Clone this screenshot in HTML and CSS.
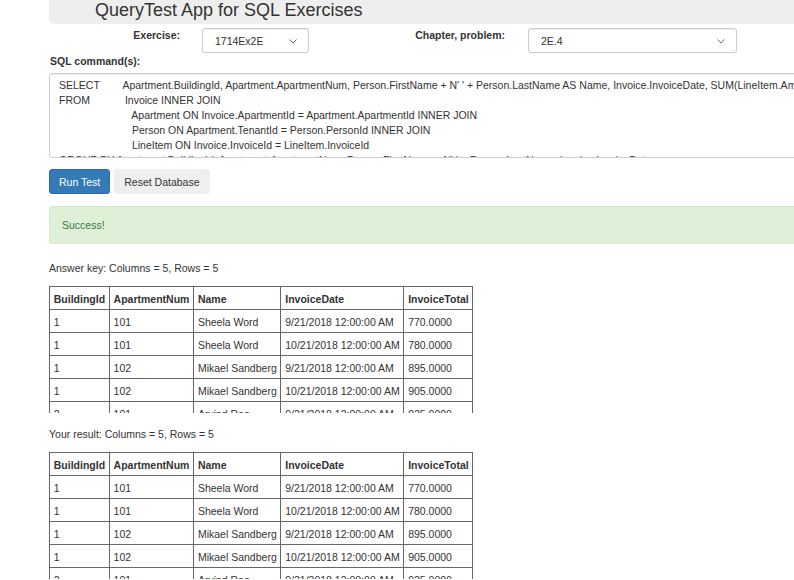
FILE: index.html
```html
<!DOCTYPE html>
<html>
<head>
<meta charset="utf-8">
<title>QueryTest App for SQL Exercises</title>
<link rel="stylesheet" href="styles.css">
</head>
<body>
<div class="page">
  <div class="header">QueryTest App for SQL Exercises</div>

  <div class="form-row">
    <label class="ctl-label ctl-label-ex">Exercise:</label>
    <div class="select select-ex"><span>1714Ex2E</span><svg class="chev" width="8" height="5" viewBox="0 0 8 5"><polyline points="0.5,0.5 4,4 7.5,0.5" fill="none" stroke="#666" stroke-width="1"/></svg></div>
    <label class="ctl-label ctl-label-ch">Chapter, problem:</label>
    <div class="select select-ch"><span>2E.4</span><svg class="chev" width="8" height="5" viewBox="0 0 8 5"><polyline points="0.5,0.5 4,4 7.5,0.5" fill="none" stroke="#666" stroke-width="1"/></svg></div>
  </div>

  <div class="sql-label">SQL command(s):</div>
  <div class="sql-box">SELECT        Apartment.BuildingId, Apartment.ApartmentNum, Person.FirstName + N' ' + Person.LastName AS Name, Invoice.InvoiceDate, SUM(LineItem.Amount) AS InvoiceTotal
FROM            Invoice INNER JOIN
                         Apartment ON Invoice.ApartmentId = Apartment.ApartmentId INNER JOIN
                         Person ON Apartment.TenantId = Person.PersonId INNER JOIN
                         LineItem ON Invoice.InvoiceId = LineItem.InvoiceId
GROUP BY Apartment.BuildingId, Apartment.ApartmentNum, Person.FirstName + N' ' + Person.LastName, Invoice.InvoiceDate</div>

  <div class="btn-row">
    <button class="btn btn-primary">Run Test</button>
    <button class="btn btn-default">Reset Database</button>
  </div>

  <div class="alert">Success!</div>

  <div class="result-label first">Answer key: Columns = 5, Rows = 5</div>
  <div class="table-wrap">
    <table class="grid">
      <tr><th>BuildingId</th><th>ApartmentNum</th><th>Name</th><th>InvoiceDate</th><th>InvoiceTotal</th></tr>
      <tr><td>1</td><td>101</td><td>Sheela Word</td><td>9/21/2018 12:00:00 AM</td><td>770.0000</td></tr>
      <tr><td>1</td><td>101</td><td>Sheela Word</td><td>10/21/2018 12:00:00 AM</td><td>780.0000</td></tr>
      <tr><td>1</td><td>102</td><td>Mikael Sandberg</td><td>9/21/2018 12:00:00 AM</td><td>895.0000</td></tr>
      <tr><td>1</td><td>102</td><td>Mikael Sandberg</td><td>10/21/2018 12:00:00 AM</td><td>905.0000</td></tr>
      <tr><td>2</td><td>101</td><td>Arvind Rao</td><td>9/21/2018 12:00:00 AM</td><td>925.0000</td></tr>
    </table>
  </div>

  <div class="result-label second">Your result: Columns = 5, Rows = 5</div>
  <div class="table-wrap">
    <table class="grid">
      <tr><th>BuildingId</th><th>ApartmentNum</th><th>Name</th><th>InvoiceDate</th><th>InvoiceTotal</th></tr>
      <tr><td>1</td><td>101</td><td>Sheela Word</td><td>9/21/2018 12:00:00 AM</td><td>770.0000</td></tr>
      <tr><td>1</td><td>101</td><td>Sheela Word</td><td>10/21/2018 12:00:00 AM</td><td>780.0000</td></tr>
      <tr><td>1</td><td>102</td><td>Mikael Sandberg</td><td>9/21/2018 12:00:00 AM</td><td>895.0000</td></tr>
      <tr><td>1</td><td>102</td><td>Mikael Sandberg</td><td>10/21/2018 12:00:00 AM</td><td>905.0000</td></tr>
      <tr><td>2</td><td>101</td><td>Arvind Rao</td><td>9/21/2018 12:00:00 AM</td><td>925.0000</td></tr>
    </table>
  </div>
</div>
</body>
</html>
```

FILE: styles.css
```css
html, body {
  margin: 0;
  padding: 0;
  overflow: hidden;
  background: #fff;
}

body {
  font-family: "Liberation Sans", Arial, sans-serif;
  font-size: 10.5px;
  line-height: 15px;
  color: #333;
}

.page {
  width: 1200px;
  padding-left: 49px;
}

.header {
  height: 24px;
  box-sizing: border-box;
  background: #eee;
  border-radius: 0 0 6px 6px;
  padding-left: 46px;
  font-size: 18px;
  line-height: 20px;
  color: #333;
}

.form-row {
  display: flex;
  align-items: flex-start;
  margin-top: 4px;
  height: 25px;
}

.ctl-label {
  font-weight: bold;
  text-align: right;
  line-height: 15px;
}

.ctl-label-ex {
  width: 131px;
  margin-right: 22px;
}

.ctl-label-ch {
  width: 196px;
  margin-right: 23px;
}

.select {
  box-sizing: border-box;
  height: 25px;
  display: flex;
  align-items: center;
  justify-content: space-between;
  border: 1px solid #ccc;
  border-radius: 3px;
  background: #fff;
  padding: 0 11px 0 12px;
  box-shadow: inset 0 1px 1px rgba(0, 0, 0, 0.075);
  color: #333;
}

.select span {
  padding-top: 1px;
}

.select-ex {
  width: 107px;
}

.select-ch {
  width: 209px;
}

.chev {
  display: block;
  margin-top: 1px;
}

.sql-label {
  font-weight: bold;
  margin-top: 1px;
  padding-left: 1px;
}

.sql-box {
  box-sizing: border-box;
  margin-top: 4px;
  height: 85px;
  border: 1px solid #ccc;
  border-radius: 3px;
  padding: 3.5px 9px 0 9px;
  white-space: pre;
  overflow: hidden;
  color: #333;
  box-shadow: inset 0 1px 1px rgba(0, 0, 0, 0.075);
}

.btn-row {
  display: flex;
  gap: 4px;
  margin-top: 11px;
}

.btn {
  font-family: "Liberation Sans", Arial, sans-serif;
  font-size: 10.5px;
  line-height: 15px;
  height: 25px;
  box-sizing: border-box;
  padding: 4.5px 9px 3.5px 9px;
  border-radius: 3px;
  border: 1px solid transparent;
  margin: 0;
}

.btn-primary {
  background: #337ab7;
  border-color: #2e6da4;
  color: #fff;
}

.btn-default {
  background: #efefef;
  border-color: #efefef;
  color: #333;
}

.alert {
  margin-top: 12px;
  box-sizing: border-box;
  height: 38px;
  padding: 10.5px 12px;
  background: #dff0d8;
  border: 1px solid #d6e9c6;
  border-radius: 3px;
  color: #3c763d;
}

.result-label {
  margin-bottom: 10.5px;
}

.result-label.first {
  margin-top: 16.5px;
}

.result-label.second {
  margin-top: 13.5px;
}

.table-wrap {
  height: 127px;
  overflow: hidden;
}

.grid {
  border-collapse: collapse;
  font-size: 10.5px;
  line-height: 15px;
  color: #333;
}

.grid th,
.grid td {
  border: 1px solid #666;
  padding: 4.5px 3.75px 2.5px 3.75px;
  text-align: left;
  white-space: nowrap;
}

.grid th {
  font-weight: bold;
}
```
